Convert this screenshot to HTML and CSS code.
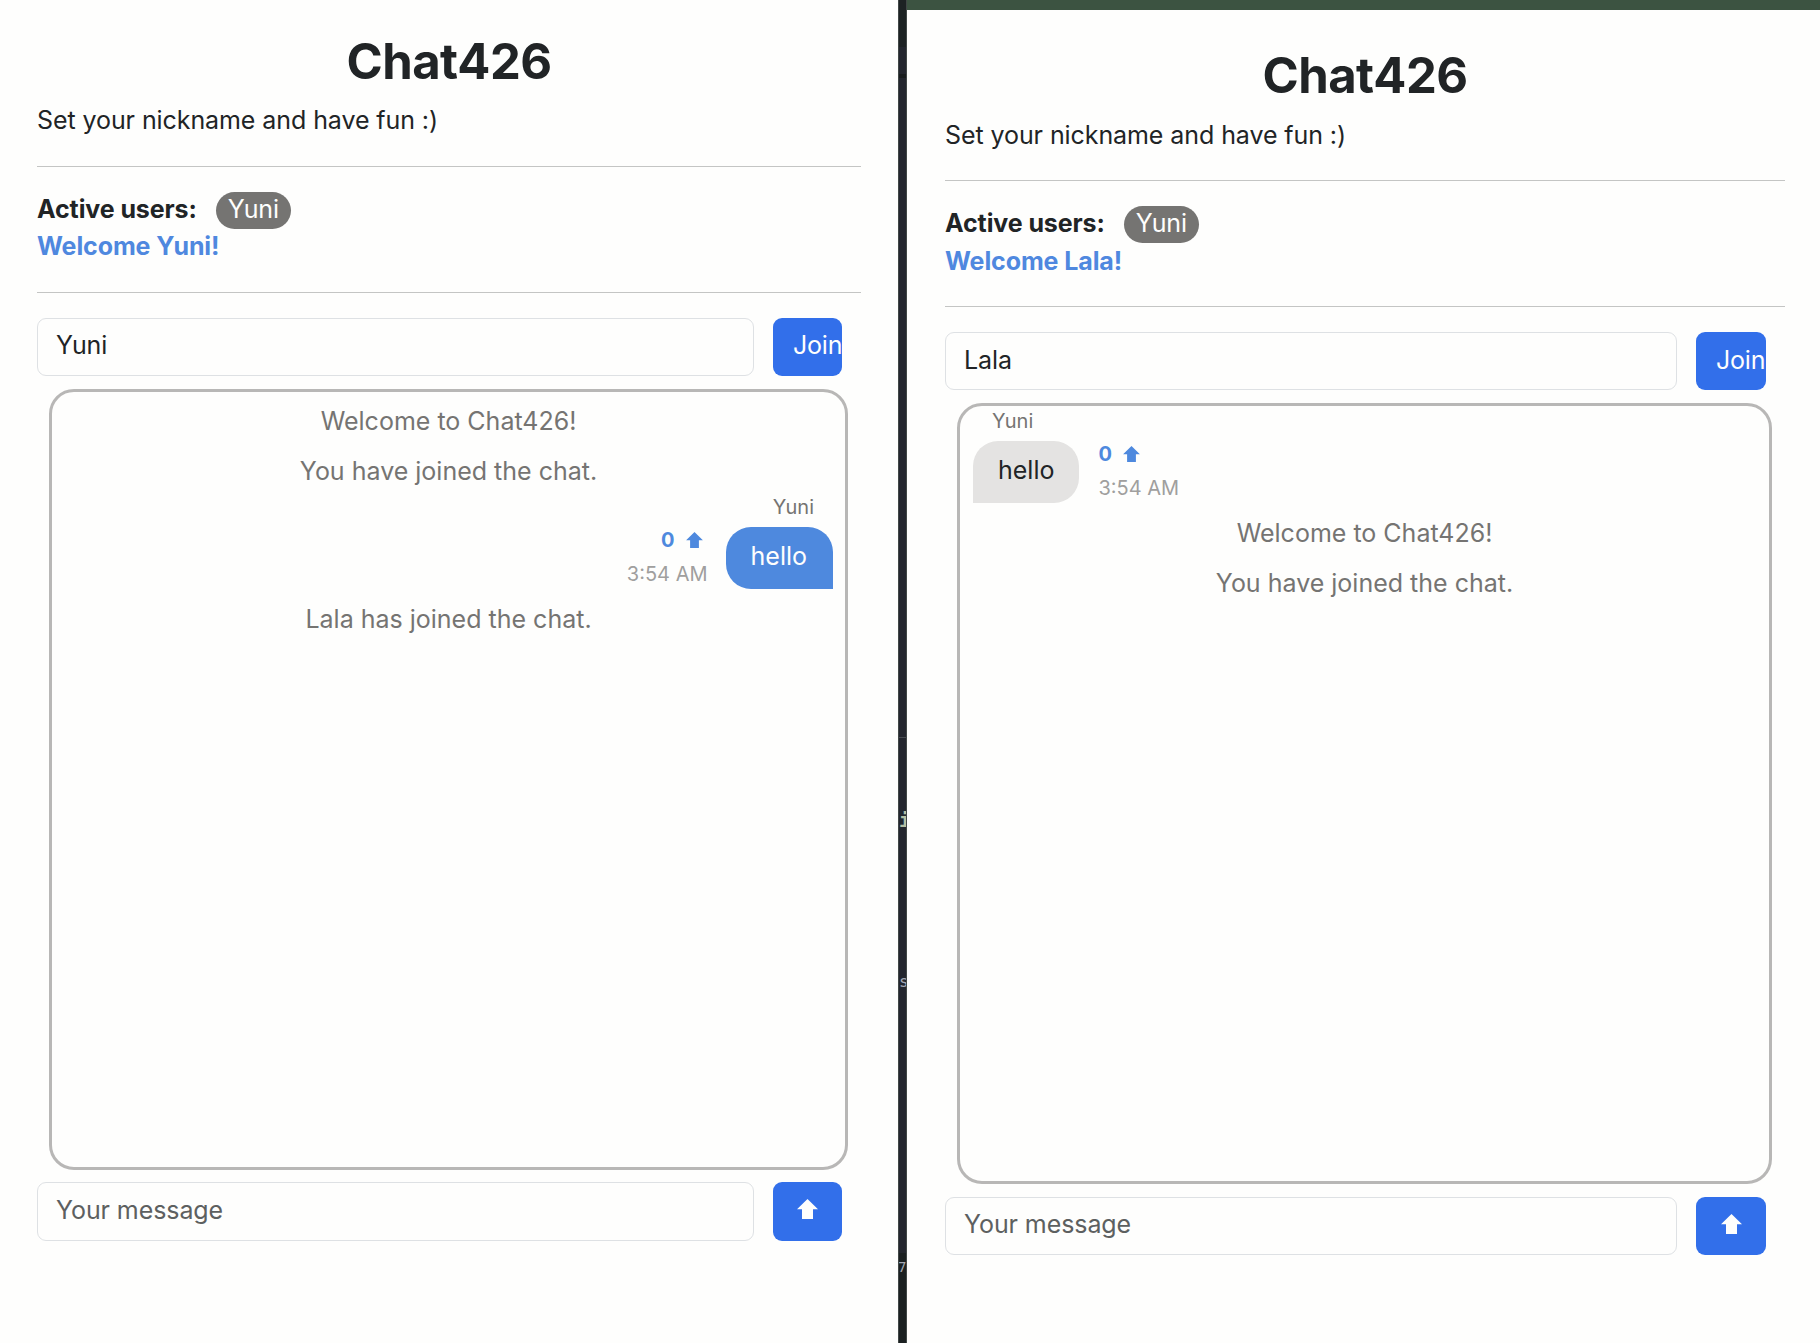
FILE: index.html
```html
<!DOCTYPE html>
<html lang="en">
<head>
<meta charset="utf-8">
<title>Chat426</title>
<link rel="stylesheet" href="styles.css">
</head>
<body>
<svg class="defs" width="0" height="0"><symbol id="up" viewBox="0 0 21 20"><path d="M10.5 0 21 10.3H16V20H5V10.3H0Z" fill="currentColor"/></symbol></svg>
<div class="desktop">
  <main class="pane pane-left">
    <h1 class="title">Chat426</h1>
    <p class="intro">Set your nickname and have fun :)</p>
    <hr class="rule">
    <section class="status">
      <div class="users"><b>Active users:</b><span class="badge">Yuni</span></div>
      <div class="welcome">Welcome Yuni!</div>
    </section>
    <hr class="rule">
    <form class="row row-name"><input class="field" value="Yuni"><button class="btn btn-join" type="button">Join</button></form>
    <section class="chat">
      <p class="note">Welcome to Chat426!</p>
      <p class="note">You have joined the chat.</p>
      <article class="msg mine">
        <div class="author">Yuni</div>
        <div class="line">
          <div class="meta"><div class="votes">0<svg class="arrow"><use href="#up"/></svg></div><div class="time">3:54 AM</div></div>
          <div class="bubble">hello</div>
        </div>
      </article>
      <p class="note">Lala has joined the chat.</p>
    </section>
    <form class="row row-send"><input class="field" placeholder="Your message"><button class="btn" type="button"><svg class="send"><use href="#up"/></svg></button></form>
  </main>
  <div class="gutter"><span class="code code-i">i</span><span class="code code-s">s</span><span class="code code-7">7</span></div>
  <main class="pane pane-right">
    <h1 class="title">Chat426</h1>
    <p class="intro">Set your nickname and have fun :)</p>
    <hr class="rule">
    <section class="status">
      <div class="users"><b>Active users:</b><span class="badge">Yuni</span></div>
      <div class="welcome">Welcome Lala!</div>
    </section>
    <hr class="rule">
    <form class="row row-name"><input class="field" value="Lala"><button class="btn btn-join" type="button">Join</button></form>
    <section class="chat">
      <article class="msg">
        <div class="author">Yuni</div>
        <div class="line">
          <div class="bubble">hello</div>
          <div class="meta"><div class="votes">0<svg class="arrow"><use href="#up"/></svg></div><div class="time">3:54 AM</div></div>
        </div>
      </article>
      <p class="note">Welcome to Chat426!</p>
      <p class="note">You have joined the chat.</p>
    </section>
    <form class="row row-send"><input class="field" placeholder="Your message"><button class="btn" type="button"><svg class="send"><use href="#up"/></svg></button></form>
  </main>
</div>
</body>
</html>
```
FILE: styles.css
```css
* { box-sizing: border-box; }
body { margin: 0; background: #fefefd; color: #212426; font: 25px/37px Inter, sans-serif; }
h1, p { margin: 0; }
.defs { display: block; height: 0; }
.desktop { display: grid; grid-template-columns: 898px 9px 913px; height: 1343px; overflow: hidden; }
.pane-left { padding: 32px 37px 0; }
.pane-right { padding: 36px 35px 0 38px; border-top: 10px solid #3c5341; }

.title { font-size: 49px; line-height: 59px; font-weight: 700; letter-spacing: -0.5px; text-align: center; }
.intro { margin-top: 11px; letter-spacing: -0.08px; }
.pane-right .intro { margin-top: 12px; }
.rule { height: 1px; margin: 27px 0 0; border: 0; background: #c4c5c4; }
.pane-right .intro + .rule { margin-top: 26px; }
.status { margin-top: 25px; height: 73px; letter-spacing: -0.1px; }
.status + .rule { margin-top: 27px; }
.users { display: flex; align-items: center; gap: 19px; height: 37px; }
.users b { line-height: 35px; height: 37px; }
.badge { height: 37px; padding: 0 12px; border-radius: 19px; background: #757472; color: #fefefd; line-height: 35px; }
.welcome { margin-top: -1px; color: #4f88df; font-weight: 700; }
.pane-right .welcome { margin-top: 0; }

.row { display: flex; gap: 19px; height: 58px; }
.row-name { margin-top: 25px; }
.row-send { margin-top: 12px; height: 59px; }
.field { flex: 0 0 717px; height: 100%; padding: 0 18px 4px; border: 1px solid #dee1e4; border-radius: 9px; background: #fefefd; color: inherit; font: inherit; letter-spacing: -0.08px; }
.field::placeholder { color: #5d6060; opacity: 1; }
.btn { flex: 0 0 69px; height: 100%; padding: 0; border: 0; border-radius: 9px; background: #326fea; color: #fefefd; font: inherit; overflow: hidden; }
.btn-join { padding: 0 0 4px 20px; text-align: left; letter-spacing: -0.2px; }
.pane-right .row-name .field, .pane-right .btn-join { padding-bottom: 2px; }
.pane-right .field { flex-basis: 732px; }
.pane-right .btn { flex-basis: 70px; }
.pane-right .row-send { margin-top: 13px; height: 58px; }
.send { display: block; width: 21px; height: 20px; margin: -5px auto 0; }

.chat { height: 781px; margin: 13px 13px 0 12px; border: 3px solid #b8b7b6; border-radius: 25px; display: flex; flex-direction: column; }
.note { margin: 13px 0 0; color: #757472; text-align: center; }
.note:first-child { margin-top: 11px; }
.msg { margin-top: 2px; padding: 0 12px; }
.msg:first-child { margin-top: 0; padding-left: 13px; }
.msg + .note { margin-top: 10px; }
.author { padding: 0 19px; color: #757472; font-size: 20px; line-height: 30px; }
.line { display: flex; gap: 19px; margin-top: 5px; }
.mine .author { text-align: right; }
.mine .line { justify-content: flex-end; }
.bubble { height: 62px; padding: 11px 25px; border-radius: 25px 25px 25px 0; background: #e4e3e2; }
.mine .bubble { padding-right: 26px; border-radius: 25px 25px 0 25px; background: #4e89de; color: #fefefd; }
.meta { font-size: 20px; line-height: 34px; margin-top: -4px; }
.mine .meta { margin-right: -1px; }
.votes { display: flex; align-items: center; gap: 11px; color: #4e89de; font-weight: 700; }
.mine .votes { justify-content: flex-end; padding-right: 5px; }
.arrow { width: 17px; height: 16px; margin-top: -1px; }
.time { color: #a09f9e; }

.gutter { position: relative; overflow: hidden; border: solid #414746; border-width: 0 1px; background: linear-gradient(#1d2223 0 47px, #23262e 47px 74px, #191d1e 74px 78px, #23262e 78px 737px, #484c51 737px 738px, #23262e 738px 1253px, #1b2021 1253px); }
.code { position: absolute; left: 0; font: 16px/20px "DejaVu Sans Mono", monospace; color: #a4a9b5; }
.code-i { top: 810px; color: #b5c0a4; font-size: 19px; font-weight: 700; }
.code-s { top: 972px; left: 0; }
.code-7 { top: 1257px; left: -1px; font-size: 14px; }
```
